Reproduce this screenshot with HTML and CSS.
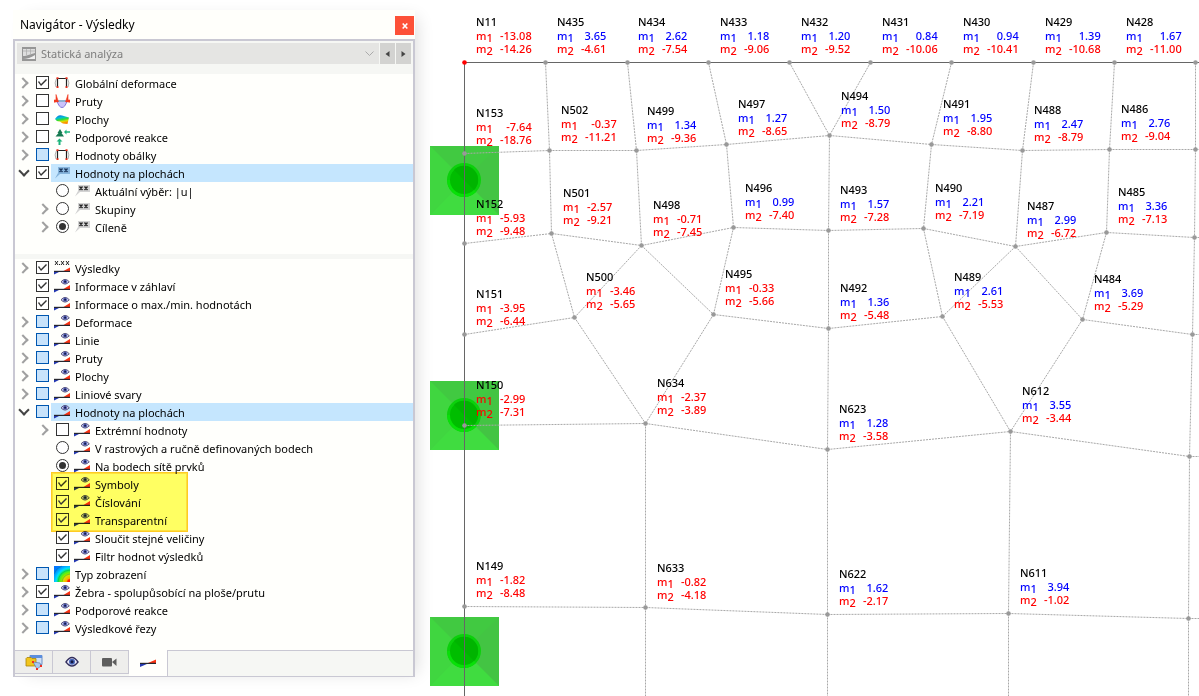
FILE: index.html
```html
<!DOCTYPE html>
<html lang="cs">
<head>
<meta charset="utf-8">
<title>Navigátor - Výsledky</title>
<link rel="stylesheet" href="styles.css">
</head>
<body>
<svg class="sprite" aria-hidden="true">
  <defs>
    <linearGradient id="leaf" x1="0" y1="0" x2="0.3" y2="1"><stop offset="0" stop-color="#1559d8"/><stop offset=".35" stop-color="#0bd"/><stop offset=".6" stop-color="#3d3"/><stop offset=".8" stop-color="#dd0"/><stop offset="1" stop-color="#f80"/></linearGradient>
    <radialGradient id="iso" cx="1" cy="1" r="1.15"><stop offset=".12" stop-color="#f20"/><stop offset=".2" stop-color="#fa0"/><stop offset=".36" stop-color="#dd0"/><stop offset=".5" stop-color="#7e0"/><stop offset=".64" stop-color="#1e5"/><stop offset=".76" stop-color="#0df"/><stop offset="1" stop-color="#07f"/></radialGradient>
  </defs>
  <symbol id="i-eye" viewBox="0 0 16 18">
    <path d="M0 12.500h6L0 15.500z" fill="#2438b0"/><path d="M16 8v4h-6.500z" fill="#fb3212"/><path d="M0 11.800h16v1.200H0z" fill="#26262e"/>
    <path d="M7 4.800Q11 0 15.300 4.800 11 9.400 7 4.800z" fill="#c9c9ee" stroke="#4a4570" stroke-width=".9"/><circle cx="11.100" cy="4.700" r="1.900" fill="#4655ac"/><circle cx="11.100" cy="4.700" r=".9" fill="#14143c"/>
  </symbol>
  <symbol id="i-values" viewBox="0 0 16 18">
    <path d="M0 12.500h6L0 15.500z" fill="#2438b0"/><path d="M16 8.500v3.500H9.500z" fill="#fb3212"/><path d="M0 11.800h16v1.200H0z" fill="#26262e"/>
    <path d="M1 2l3 4M4 2L1 6M7 2l3 4M10 2L7 6M12 2l3 4M15 2l-3 4" stroke="#222" stroke-width="1"/><path d="M5 5h1v1H5z" fill="#222"/>
  </symbol>
  <symbol id="i-wedge" viewBox="0 0 16 18">
    <path d="M0 9.600h8L0 13z" fill="#2438b0"/><path d="M16 5.500v3.500H8z" fill="#fb3212"/><path d="M0 8.800h16V10H0z" fill="#26262e"/>
  </symbol>
  <symbol id="i-frame" viewBox="0 0 16 18">
    <path d="M3.500 13V4.500h9V13" fill="none" stroke="#222" stroke-width="1.200"/><path d="M2.500 4.500Q0 9 2 13M13.500 4.500Q16 9 14 13" fill="none" stroke="#999" stroke-width=".8"/>
    <path d="M2.500 3.300h2v1.700h-2zM11.500 3.300h2v1.700h-2zM2.500 12.300h2V14h-2zM11.500 12.300h2V14h-2z" fill="#f0301c"/>
  </symbol>
  <symbol id="i-member" viewBox="0 0 16 18">
    <path d="M3 9h10q-2 6.500-5 6.500T3 9z" fill="#cbc3fb" stroke="#8478d8"/><path d="M3 8h10v2H3z" fill="#8fb0cf"/>
    <path d="M0 10.500V8h2V2.500L4.500 10M16 10.500V8h-2V2.500L11.500 10" fill="#f33a20" stroke="#f33a20" stroke-width=".6"/>
  </symbol>
  <symbol id="i-surface" viewBox="0 0 16 18">
    <path d="M1 9Q4 4 8 5.500l7 2L13.500 14Q8 14 6 11.500 3 12 1 9z" fill="url(#leaf)"/>
  </symbol>
  <symbol id="i-support" viewBox="0 0 16 18">
    <path d="M6 1l2.500 4h-1L10 8.500H1.500L4.500 5h-1z" fill="#177a50"/><path d="M10 4l2.500-2.500v1.700H16v1.600h-3.500v1.700z" fill="#1cb47a"/><path d="M5.500 10.500L8.500 13.500h-2V17h-2v-3.500h-2z" fill="#1cb47a"/>
  </symbol>
  <symbol id="i-flag" viewBox="0 0 16 18">
    <path d="M4 3h12v7H6L1 14.500 4 9z" fill="#d3d3d3"/><path d="M5.500 4.500l3 3.500M8.500 4.500l-3 3.500M10.500 4.500l3 3.500M13.500 4.500l-3 3.500" stroke="#222" stroke-width="1.300"/>
  </symbol>
  <symbol id="i-flag-blue" viewBox="0 0 16 18">
    <path d="M4 3h12v7H6L1 14.500 4 9z" fill="#86b4dc"/><path d="M5.500 4.500l3 3.500M8.500 4.500l-3 3.500M10.500 4.500l3 3.500M13.500 4.500l-3 3.500" stroke="#17335a" stroke-width="1.300"/>
  </symbol>
  <symbol id="i-iso" viewBox="0 0 16 18">
    <path d="M0 1h16v16H0z" fill="url(#iso)"/><path d="M0 9q2-6 8-8M4 17Q5 6 16 5M8 17q1-7 8-8" fill="none" stroke="#0a8a60" stroke-opacity=".35"/>
  </symbol>
</svg>

<main class="workspace">
  <aside class="navigator" aria-label="Navigátor">
    <header class="titlebar">
      <h1 class="title">Navigátor - Výsledky</h1>
      <button class="close" type="button" aria-label="Zavřít"><svg viewBox="0 0 8 8" width="8" height="8"><path d="M1.700 1.500l4.600 5M6.300 1.500l-4.600 5" stroke="#fff" stroke-width="1.600"/></svg></button>
    </header>
    <div class="frame">
      <div class="toolbar">
        <div class="combo">
          <svg class="combo-icon" viewBox="0 0 14 14" width="14" height="14"><path d="M0 0h14v14H0z" fill="#969696"/><path d="M1 2h12v4L3 9H1z" fill="#dedede"/><path d="M1 12q6 0 12-4v4z" fill="#efefef"/><path d="M1 4h12M4.500 2v6M8.500 2v5" stroke="#aaa" stroke-width=".7"/></svg>
          <select class="analysis" aria-label="Typ analýzy" disabled><option>Statická analýza</option></select>
          <svg class="combo-arrow" viewBox="0 0 9 6" width="9" height="6"><path d="M.5 .5l4 4 4-4" fill="none" stroke="#aaa"/></svg>
        </div>
        <button class="step" type="button" aria-label="Předchozí"><svg viewBox="0 0 5 8" width="5" height="8"><path d="M4.500 1v6L.5 4z" fill="#444"/></svg></button>
        <button class="step" type="button" aria-label="Další"><svg viewBox="0 0 5 8" width="5" height="8"><path d="M.5 1v6l4-3z" fill="#444"/></svg></button>
      </div>

      <ul class="tree tree-top">
        <li class="row"><button class="exp" type="button" aria-label="Rozbalit"></button><input class="box" id="a1" type="checkbox" checked><label class="name" for="a1"><svg class="ico"><use href="#i-frame"/></svg>Globální deformace</label></li>
        <li class="row"><button class="exp" type="button" aria-label="Rozbalit"></button><input class="box" id="a2" type="checkbox"><label class="name" for="a2"><svg class="ico"><use href="#i-member"/></svg>Pruty</label></li>
        <li class="row"><button class="exp" type="button" aria-label="Rozbalit"></button><input class="box" id="a3" type="checkbox"><label class="name" for="a3"><svg class="ico"><use href="#i-surface"/></svg>Plochy</label></li>
        <li class="row"><button class="exp" type="button" aria-label="Rozbalit"></button><input class="box" id="a4" type="checkbox"><label class="name" for="a4"><svg class="ico"><use href="#i-support"/></svg>Podporové reakce</label></li>
        <li class="row"><button class="exp" type="button" aria-label="Rozbalit"></button><input class="box partial" id="a5" type="checkbox"><label class="name" for="a5"><svg class="ico"><use href="#i-frame"/></svg>Hodnoty obálky</label></li>
        <li class="row selected"><button class="exp open" type="button" aria-label="Sbalit"></button><input class="box" id="a6" type="checkbox" checked><label class="name" for="a6"><svg class="ico"><use href="#i-flag-blue"/></svg>Hodnoty na plochách</label></li>
        <li class="row sub"><span class="exp-gap"></span><input class="box round" id="a7" name="scope" type="radio"><label class="name" for="a7"><svg class="ico"><use href="#i-flag"/></svg>Aktuální výběr: |u|</label></li>
        <li class="row sub"><button class="exp" type="button" aria-label="Rozbalit"></button><input class="box round" id="a8" name="scope" type="radio"><label class="name" for="a8"><svg class="ico"><use href="#i-flag"/></svg>Skupiny</label></li>
        <li class="row sub"><button class="exp" type="button" aria-label="Rozbalit"></button><input class="box round" id="a9" name="scope" type="radio" checked><label class="name" for="a9"><svg class="ico"><use href="#i-flag"/></svg>Cíleně</label></li>
      </ul>

      <ul class="tree tree-bottom">
        <li class="row"><button class="exp" type="button" aria-label="Rozbalit"></button><input class="box" id="b1" type="checkbox" checked><label class="name" for="b1"><svg class="ico"><use href="#i-values"/></svg>Výsledky</label></li>
        <li class="row"><span class="exp-gap"></span><input class="box" id="b2" type="checkbox" checked><label class="name" for="b2"><svg class="ico"><use href="#i-eye"/></svg>Informace v záhlaví</label></li>
        <li class="row"><span class="exp-gap"></span><input class="box" id="b3" type="checkbox" checked><label class="name" for="b3"><svg class="ico"><use href="#i-eye"/></svg>Informace o max./min. hodnotách</label></li>
        <li class="row"><button class="exp" type="button" aria-label="Rozbalit"></button><input class="box partial" id="b4" type="checkbox"><label class="name" for="b4"><svg class="ico"><use href="#i-eye"/></svg>Deformace</label></li>
        <li class="row"><button class="exp" type="button" aria-label="Rozbalit"></button><input class="box partial" id="b5" type="checkbox"><label class="name" for="b5"><svg class="ico"><use href="#i-eye"/></svg>Linie</label></li>
        <li class="row"><button class="exp" type="button" aria-label="Rozbalit"></button><input class="box partial" id="b6" type="checkbox"><label class="name" for="b6"><svg class="ico"><use href="#i-eye"/></svg>Pruty</label></li>
        <li class="row"><button class="exp" type="button" aria-label="Rozbalit"></button><input class="box partial" id="b7" type="checkbox"><label class="name" for="b7"><svg class="ico"><use href="#i-eye"/></svg>Plochy</label></li>
        <li class="row"><button class="exp" type="button" aria-label="Rozbalit"></button><input class="box partial" id="b8" type="checkbox"><label class="name" for="b8"><svg class="ico"><use href="#i-eye"/></svg>Liniové svary</label></li>
        <li class="row selected"><button class="exp open" type="button" aria-label="Sbalit"></button><input class="box partial" id="b9" type="checkbox"><label class="name" for="b9"><svg class="ico"><use href="#i-eye"/></svg>Hodnoty na plochách</label></li>
        <li class="row sub"><button class="exp" type="button" aria-label="Rozbalit"></button><input class="box" id="b10" type="checkbox"><label class="name" for="b10"><svg class="ico"><use href="#i-eye"/></svg>Extrémní hodnoty</label></li>
        <li class="row sub"><span class="exp-gap"></span><input class="box round" id="b11" name="points" type="radio"><label class="name" for="b11"><svg class="ico"><use href="#i-eye"/></svg>V rastrových a ručně definovaných bodech</label></li>
        <li class="row sub"><span class="exp-gap"></span><input class="box round" id="b12" name="points" type="radio" checked><label class="name" for="b12"><svg class="ico"><use href="#i-eye"/></svg>Na bodech sítě prvků</label></li>
        <li class="row sub marked"><span class="exp-gap"></span><input class="box" id="b13" type="checkbox" checked><label class="name" for="b13"><svg class="ico"><use href="#i-eye"/></svg>Symboly</label><span class="marker"></span></li>
        <li class="row sub"><span class="exp-gap"></span><input class="box" id="b14" type="checkbox" checked><label class="name" for="b14"><svg class="ico"><use href="#i-eye"/></svg>Číslování</label></li>
        <li class="row sub"><span class="exp-gap"></span><input class="box" id="b15" type="checkbox" checked><label class="name" for="b15"><svg class="ico"><use href="#i-eye"/></svg>Transparentní</label></li>
        <li class="row sub"><span class="exp-gap"></span><input class="box" id="b16" type="checkbox" checked><label class="name" for="b16"><svg class="ico"><use href="#i-eye"/></svg>Sloučit stejné veličiny</label></li>
        <li class="row sub"><span class="exp-gap"></span><input class="box" id="b17" type="checkbox" checked><label class="name" for="b17"><svg class="ico"><use href="#i-eye"/></svg>Filtr hodnot výsledků</label></li>
        <li class="row"><button class="exp" type="button" aria-label="Rozbalit"></button><input class="box partial" id="b18" type="checkbox"><label class="name" for="b18"><svg class="ico"><use href="#i-iso"/></svg>Typ zobrazení</label></li>
        <li class="row"><button class="exp" type="button" aria-label="Rozbalit"></button><input class="box" id="b19" type="checkbox" checked><label class="name" for="b19"><svg class="ico"><use href="#i-eye"/></svg>Žebra - spolupůsobící na ploše/prutu</label></li>
        <li class="row"><button class="exp" type="button" aria-label="Rozbalit"></button><input class="box partial" id="b20" type="checkbox"><label class="name" for="b20"><svg class="ico"><use href="#i-eye"/></svg>Podporové reakce</label></li>
        <li class="row"><button class="exp" type="button" aria-label="Rozbalit"></button><input class="box partial" id="b21" type="checkbox"><label class="name" for="b21"><svg class="ico"><use href="#i-eye"/></svg>Výsledkové řezy</label></li>
      </ul>

      <nav class="tabs">
        <button class="tab" type="button" aria-label="Data"><svg viewBox="0 0 18 18" width="18" height="18"><path d="M5 2.500h12v9H5z" fill="#cfe0f4" stroke="#6d8fc6"/><path d="M5 2h12v3H5z" fill="#5b8ede"/><path d="M1 5.500l1-1h4l1 1h4V13H1z" fill="#f2c51c" stroke="#a8830a" stroke-width=".8"/><path d="M8 9l7 1 1 3-4 3z" fill="#a9c8ef" stroke="#5d7cab" stroke-width=".7"/><path d="M7 8h2v2H7zM15 12h2v2h-2zM11 15h2v2h-2z" fill="#f03020"/></svg></button>
        <button class="tab" type="button" aria-label="Zobrazení"><svg viewBox="0 0 14 12" width="14" height="12"><path d="M1 6q6-9 12 0-6 8-12 0z" fill="#e8e8fc" stroke="#332f5c" stroke-width="1.400"/><circle cx="7" cy="5.800" r="3" fill="#4665b8"/><circle cx="7" cy="5.800" r="1.500" fill="#131840"/></svg></button>
        <button class="tab" type="button" aria-label="Pohledy"><svg viewBox="0 0 15 10" width="15" height="10"><rect x="0" y="1" width="10" height="8.500" rx="1" fill="#5e5e5e"/><path d="M10 5l4.500-3.500v7.500z" fill="#5e5e5e"/></svg></button>
        <button class="tab active" type="button" aria-label="Výsledky"><svg width="16" height="18"><use href="#i-wedge"/></svg></button>
      </nav>
    </div>
  </aside>

  <section class="model" id="model" aria-label="Model">
    <svg class="mesh" id="mesh" aria-hidden="true"></svg>
  </section>
</main>
<script src="model.js"></script>
</body>
</html>
```
FILE: styles.css
```css
* { box-sizing: border-box; }
body {
  margin: 0;
  background: #fff;
  color: #000;
  font: 11px/18px "Noto Sans", "Open Sans", sans-serif;
}
button, select, input { font: inherit; margin: 0; padding: 0; border: 0; }
.sprite { position: absolute; width: 0; height: 0; }
.workspace {
  display: grid;
  grid-template-columns: 402px minmax(0, 1fr);
  column-gap: 15px;
  padding-left: 13px;
  height: 100vh;
  overflow: hidden;
}

/* Navigator panel */
.navigator {
  align-self: start;
  margin-top: 10px;
  background: #fffffb;
  box-shadow: 8px 2px 16px -6px rgba(0, 0, 0, .14);
}
.titlebar {
  display: flex;
  align-items: center;
  justify-content: space-between;
  height: 29px;
  padding: 0 1px 0 7px;
}
.title { margin: 0; font-size: 12px; font-weight: 400; }
.close {
  display: grid;
  place-items: center;
  width: 19px;
  height: 19px;
  margin-top: 2px;
  background: #fd5138;
}
.frame {
  border: 2px solid #c9c8d3;
  border-bottom-width: 1px;
  background: #f6f7f4;
}
.toolbar {
  display: flex;
  gap: 1px;
  padding: 2px 2px 10px;
}
.combo {
  display: flex;
  align-items: center;
  flex: 1;
  height: 21px;
  padding: 0 5px;
  background: #e5e5e3;
}
.analysis {
  flex: 1;
  padding-left: 5px;
  appearance: none;
  background: transparent;
  color: #7d7d7d;
  opacity: 1;
}
.step {
  display: grid;
  place-items: center;
  width: 15px;
  background: #d3d3d1;
}

/* Trees */
.tree {
  margin: 0;
  padding: 0;
  list-style: none;
  background: #fffffc;
}
.tree-top { padding-bottom: 18px; margin-bottom: 5px; }
.tree-bottom { padding-bottom: 13px; }
.row { display: flex; height: 18px; padding-left: 2px; }
.sub { padding-left: 22px; }
.exp, .exp-gap { flex: none; width: 14px; height: 18px; background: none; }
.exp { display: grid; place-items: center; padding-right: 3px; }
.exp::before {
  content: "";
  width: 6px;
  height: 6px;
  border: solid #a0a0a0;
  border-width: 2px 2px 0 0;
  transform: rotate(45deg);
}
.exp.open { padding: 0 0 4px; }
.exp.open::before { border-color: #444; transform: rotate(135deg); }
.box {
  flex: none;
  display: grid;
  place-items: center;
  appearance: none;
  width: 13px;
  height: 13px;
  margin: 2px 2px 0 5px;
  border: 1px solid #333;
  background: #fff;
}
.box:checked::before {
  content: "";
  width: 9px;
  height: 7px;
  background: #333;
  clip-path: polygon(0 3px, 1px 2px, 3px 5px, 8px 0, 9px 1px, 3px 7px);
}
.partial { border-color: #0057b0; background: #c8e3fb; }
.round { border-radius: 50%; }
.round:checked::before { width: 7px; height: 7px; border-radius: 50%; clip-path: none; }
.name {
  display: flex;
  flex: 1;
  gap: 5px;
  padding-left: 3px;
  line-height: 20px;
  white-space: nowrap;
}
.selected .name { background: #c5e6fe; }
.ico { flex: none; width: 16px; height: 18px; }
.marked { position: relative; }
.marker {
  position: absolute;
  left: 36px;
  top: -3px;
  width: 137px;
  height: 60px;
  border: 1px solid #fc2;
  outline: 1px solid #fde040;
  outline-offset: -2px;
  background: #ffff63;
  mix-blend-mode: multiply;
  pointer-events: none;
}

/* Bottom tabs */
.tabs { display: flex; height: 26px; border-top: 1px solid #c9c8d3; }
.tab {
  display: grid;
  place-items: center;
  width: 38px;
  height: 23px;
  border: solid #c9c8d3;
  border-width: 0 1px 1px 0;
  background: #eeeeec;
}
.tab.active { height: 26px; width: 39px; margin-top: -1px; border-bottom: 0; background: #fffffc; }

/* Model view */
.model { position: relative; overflow: hidden; }
.mesh { display: block; width: 100%; height: 100%; }
.edge { stroke: #a8a8a8; stroke-width: 1; stroke-dasharray: 2 1; fill: none; }
.border { stroke: #666; stroke-width: 1; fill: none; shape-rendering: crispEdges; }
.node { fill: #999; }
.origin { fill: #f00; }
.tag {
  position: absolute;
  display: grid;
  grid-template-columns: 24px auto;
  line-height: 13px;
  font-weight: 500;
}
.tag-name { grid-column: 1 / 3; padding-bottom: 1px; }
.tag-value { text-align: right; }
.idx { position: relative; top: 2px; }
.pos { color: #00f; }
.neg { color: #f00; }
```
FILE: model.js
```js
// Horizontal scroll of the view over the model plane.
const VIEW_X = 430;

const nodes = [
  [[464,62],[545,62],[627,62],[708,62],[789,62],[870,62],[951,62],[1033,62],[1114,62],[1195,62]],
  [[464,153],[549,150],[636,150],[726,144],[829,135],[931,144],[1022,150],[1109,149],[1195,149]],
  [[464,243],[551,233],[641,245],[733,227],[828,230],[923,228],[1015,246],[1106,232],[1194,237]],
  [[464,334],[574,317],[713,314],[828,328],[942,316],[1082,319],[1192,334]],
  [[464,425],[645,423],[827,449],[1010,431],[1189,456]],
  [[464,606],[645,607],[827,614],[1008,613],[1188,618]]
];

// Each link joins [row, index] to [row, index].
const links = [];
const link = (r, a, s, b) => links.push([nodes[r][a], nodes[s][b]]);
[1, 2, 4, 5].forEach(r => nodes[r].slice(1).forEach((n, i) => link(r, i, r, i + 1)));
[[1,1],[2,2],[3,3],[4,4],[5,4],[6,5],[7,6],[8,7],[9,8]].forEach(([a, b]) => link(0, a, 1, b));
for (let i = 1; i < 9; i++) link(1, i, 2, i);
[[1,1],[2,1],[2,2],[3,2],[4,3],[5,4],[6,4],[6,5],[7,5],[8,6]].forEach(([a, b]) => link(2, a, 3, b));
[[0,1],[2,3],[3,4],[5,6]].forEach(([a, b]) => link(3, a, 3, b));
[[1,1],[2,1],[3,2],[4,3],[5,3],[6,4]].forEach(([a, b]) => link(3, a, 4, b));
for (let i = 1; i < 5; i++) {
  link(4, i, 5, i);
  links.push([nodes[5][i], [nodes[5][i][0], 1400]]);
}
[1, 2, 3, 4, 5].forEach(r => {
  const end = nodes[r][nodes[r].length - 1];
  links.push([end, [end[0] + 90, end[1]]]);
});

const tags = [
  ["N11",476,15,"-13.08","-14.26"],["N435",557,15,"3.65","-4.61"],["N434",638,15,"2.62","-7.54"],
  ["N433",720,15,"1.18","-9.06"],["N432",801,15,"1.20","-9.52"],["N431",882,15,"0.84","-10.06"],
  ["N430",963,15,"0.94","-10.41"],["N429",1045,15,"1.39","-10.68"],["N428",1126,15,"1.67","-11.00"],
  ["N153",476,106,"-7.64","-18.76"],["N502",561,103,"-0.37","-11.21"],["N499",647,104,"1.34","-9.36"],
  ["N497",738,97,"1.27","-8.65"],["N494",841,89,"1.50","-8.79"],["N491",943,97,"1.95","-8.80"],
  ["N488",1034,103,"2.47","-8.79"],["N486",1121,102,"2.76","-9.04"],["N152",476,197,"-5.93","-9.48"],
  ["N501",563,186,"-2.57","-9.21"],["N498",653,198,"-0.71","-7.45"],["N496",745,181,"0.99","-7.40"],
  ["N493",840,183,"1.57","-7.28"],["N490",935,181,"2.21","-7.19"],["N487",1027,199,"2.99","-6.72"],
  ["N485",1118,185,"3.36","-7.13"],["N151",476,287,"-3.95","-6.44"],["N500",586,270,"-3.46","-5.65"],
  ["N495",725,267,"-0.33","-5.66"],["N492",840,281,"1.36","-5.48"],["N489",954,270,"2.61","-5.53"],
  ["N484",1094,272,"3.69","-5.29"],["N150",476,378,"-2.99","-7.31"],["N634",657,376,"-2.37","-3.89"],
  ["N623",839,402,"1.28","-3.58"],["N612",1022,384,"3.55","-3.44"],["N149",476,559,"-1.82","-8.48"],
  ["N633",657,561,"-0.82","-4.18"],["N622",839,567,"1.62","-2.17"],["N611",1020,566,"3.94","-1.02"]
];

const support = cy => `<g transform="translate(464 ${cy})">
  <path d="M-34-34H35V35H-34z" fill="#41d041"/>
  <path d="M-34-34H35L0 0z" fill="#41c941"/><path d="M35-34V35L0 0z" fill="#43c443"/>
  <path d="M35 35H-34L0 0z" fill="#40dc40"/><path d="M-34 35V-34L0 0z" fill="#40d640"/>
  <circle r="17" fill="#0bd00b"/><path d="M-17 0a17 17 0 0 0 29 12L0 0z" fill="#08e008"/>
  <circle r="14" fill="#00bd00"/><path d="M-10-10A14 14 0 0 1 10 10z" fill="#00b400"/></g>`;

const line = ([a, b]) => `<path class="edge" d="M${a[0] + .5} ${a[1] + .5}L${b[0] + .5} ${b[1] + .5}"/>`;
const dot = ([x, y], r, i) => `<circle class="${r + i ? "node" : "origin"}" cx="${x + .5}" cy="${y + .5}" r="2.3"/>`;

document.getElementById("mesh").innerHTML = `<g transform="translate(${-VIEW_X} 0)">
  ${[180, 415, 651].map(support).join("")}
  ${links.map(line).join("")}
  <path class="border" d="M2400 62.500H464.500V1400"/>
  ${nodes.map((row, r) => row.map((n, i) => dot(n, r, i)).join("")).join("")}</g>`;

const part = (k, v) => {
  const tone = v[0] === "-" ? "neg" : "pos";
  return `<span class="${tone}">m<span class="idx">${k}</span></span><span class="tag-value ${tone}">${v}</span>`;
};
document.getElementById("model").insertAdjacentHTML("beforeend", tags.map(([name, x, y, m1, m2]) =>
  `<div class="tag" style="left:${x - VIEW_X}px;top:${y}px"><span class="tag-name">${name}</span>${part(1, m1)}${part(2, m2)}</div>`).join(""));
```
